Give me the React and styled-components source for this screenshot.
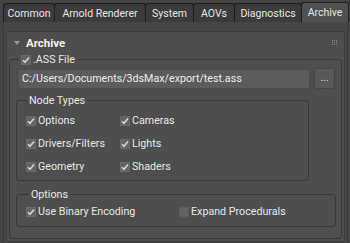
import React from "react";
import styled, { createGlobalStyle } from "styled-components";

const Global = createGlobalStyle`
  html, body { margin: 0; padding: 0; background: #444444; }
  body { font-family: Roboto, "Liberation Sans", sans-serif; font-size: 10.7px; color: #dcdcdc; }
`;

const Root = styled.div`
  width: 350px;
  height: 243px;
  overflow: hidden;
  background: #444444;
  display: flex;
  flex-direction: column;
`;

const TabBar = styled.div`
  display: flex;
  align-items: flex-end;
  height: 22px;
  padding-left: 3px;
  box-sizing: border-box;
`;

const Tab = styled.div`
  box-sizing: border-box;
  width: ${(p) => p.$w}px;
  flex: none;
  height: ${(p) => (p.$active ? 20 : 19)}px;
  display: flex;
  align-items: center;
  justify-content: center;
  border: 1px solid #1f1f1f;
  border-bottom: none;
  border-radius: 3px 3px 0 0;
  background: ${(p) => (p.$active ? "#505050" : "#3b3b3b")};
  color: #e4e4e4;
  margin-right: -1px;
  white-space: nowrap;
  font-size: 10.5px;
`;

const Pane = styled.div`
  flex: 1;
  display: flex;
  flex-direction: column;
  padding: 9px 2px 1px 2px;
  border-left: 1px solid #3a3a3a;
  border-right: 1px solid #3a3a3a;
  margin: 0 2px 0 3px;
  background: #464646;
`;

const Rollout = styled.div`
  flex: 1;
  display: flex;
  flex-direction: column;
  background: #4e4e4e;
  border: 1px solid #3c3c3c;
  border-radius: 3px;
  padding: 0 2px 2px 2px;
`;

const Header = styled.div`
  height: 21px;
  display: flex;
  align-items: center;
  padding-left: 5px;
  gap: 6px;
`;

const Triangle = styled.span`
  width: 0;
  height: 0;
  border-left: 3.5px solid transparent;
  border-right: 3.5px solid transparent;
  border-top: 4px solid #9a9a9a;
`;

const Title = styled.span`
  font-weight: bold;
  font-size: 11.5px;
  color: #f2f2f2;
  flex: 1;
`;

const Grip = styled.svg`
  margin-right: 4px;
`;

const Group = styled.fieldset`
  margin: 0;
  padding: ${(p) => p.$pad};
  border: 1px solid #383838;
  border-radius: 3px;
  min-width: 0;
  flex: ${(p) => (p.$grow ? 1 : "none")};
  width: ${(p) => p.$width || "auto"};
  box-sizing: border-box;
  display: flex;
  flex-direction: column;
`;

const Legend = styled.legend`
  padding: 0 2px;
  margin-left: ${(p) => p.$ml}px;
  display: flex;
  align-items: center;
  gap: 3px;
  color: #e8e8e8;
  line-height: 13px;
`;

const FileRow = styled.div`
  display: flex;
  align-items: center;
  gap: 5px;
  margin: 2px 0 0 3px;
`;

const PathInput = styled.div`
  width: 290px;
  height: 18px;
  box-sizing: border-box;
  background: #5c5c5c;
  border-radius: 2px;
  display: flex;
  align-items: center;
  padding-left: 3px;
  color: #ececec;
  white-space: nowrap;
`;

const BrowseButton = styled.div`
  width: 21px;
  height: 21px;
  box-sizing: border-box;
  background: #595959;
  border: 1px solid #444;
  border-radius: 3px;
  display: flex;
  align-items: center;
  justify-content: center;
  color: #cfd8e6;
  padding-bottom: 3px;
`;

const Grid = styled.div`
  display: grid;
  grid-template-columns: ${(p) => p.$cols};
  row-gap: ${(p) => p.$rowGap}px;
`;

const CheckRow = styled.label`
  display: flex;
  align-items: center;
  gap: 2px;
  height: 13px;
  color: #e6e6e6;
  white-space: nowrap;
`;

const Box = styled.span`
  width: 10px;
  height: 10px;
  box-sizing: border-box;
  background: #636363;
  border: 1px solid ${(p) => (p.$checked ? "#6a6a6a" : "#5a5a5a")};
  display: inline-flex;
  align-items: center;
  justify-content: center;
  flex: none;
`;

function Check({ checked = true, children }) {
  return (
    <CheckRow>
      <Box $checked={checked}>
        {checked && (
          <svg width="8" height="8" viewBox="0 0 8 8">
            <path d="M1 4.2 L3 6.3 L7 1.5" fill="none" stroke="#d4d4d4" strokeWidth="1.6" />
          </svg>
        )}
      </Box>
      {children}
    </CheckRow>
  );
}

const Stack = styled.div`
  display: flex;
  flex-direction: column;
  gap: ${(p) => p.$gap}px;
  margin-top: ${(p) => p.$mt || 0}px;
`;

export default function App() {
  const tabs = [
    ["Common", 52],
    ["Arnold Renderer", 92],
    ["System", 49],
    ["AOVs", 42],
    ["Diagnostics", 68],
    ["Archive", 48],
  ];
  return (
    <Root>
      <Global />
      <TabBar>
        {tabs.map(([t, w]) => (
          <Tab key={t} $w={w} $active={t === "Archive"}>
            {t}
          </Tab>
        ))}
      </TabBar>
      <Pane>
        <Rollout>
          <Header>
            <Triangle />
            <Title>Archive</Title>
            <Grip width="6" height="6" viewBox="0 0 6 6">
              {[0, 2, 4].map((y) =>
                [0, 2, 4].map((x) => (
                  <rect key={`${x}-${y}`} x={x} y={y} width="1" height="1" fill="#8a8a8a" />
                ))
              )}
            </Grip>
          </Header>
          <Group $grow $pad="0 3px 5px 6px">
            <Legend $ml={3}>
              <Check>.ASS File</Check>
            </Legend>
            <FileRow>
              <PathInput>C:/Users/Documents/3dsMax/export/test.ass</PathInput>
              <BrowseButton>...</BrowseButton>
            </FileRow>
            <Stack $gap={7} $mt={5}>
              <Group $width="293px" $pad="7px 0 7px 9px">
                <Legend $ml={1}>Node Types</Legend>
                <Grid $cols="94px 1fr" $rowGap={10}>
                  <Check>Options</Check>
                  <Check>Cameras</Check>
                  <Check>Drivers/Filters</Check>
                  <Check>Lights</Check>
                  <Check>Geometry</Check>
                  <Check>Shaders</Check>
                </Grid>
              </Group>
              <Group $width="320px" $pad="4px 0 8px 9px">
                <Legend $ml={3}>Options</Legend>
                <Grid $cols="153px 1fr" $rowGap={0}>
                  <Check>Use Binary Encoding</Check>
                  <Check checked={false}>Expand Procedurals</Check>
                </Grid>
              </Group>
            </Stack>
          </Group>
        </Rollout>
      </Pane>
    </Root>
  );
}
